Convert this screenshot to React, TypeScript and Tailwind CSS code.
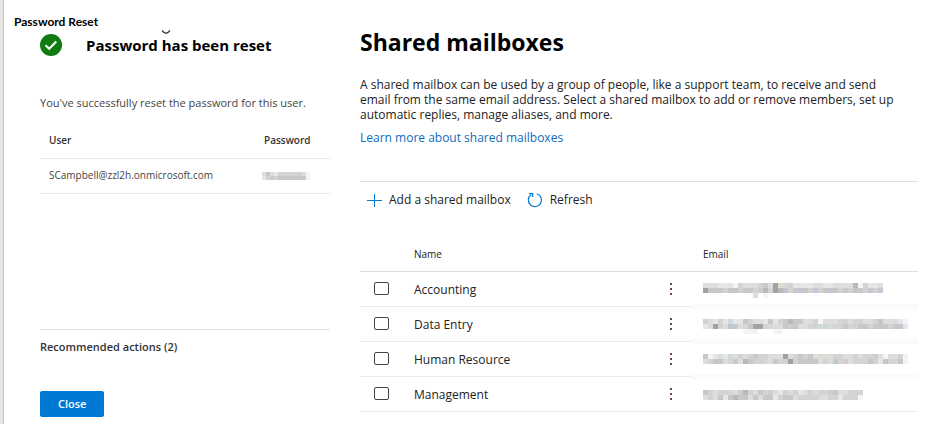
type Mosaic = { size: number; rows: string[] };

type Mailbox = { name: string; email: Mosaic };

const shades: Record<string, string> = {
  "1": "#a5a0a2",
  "2": "#b9b9bb",
  "3": "#c8c8c8",
  "4": "#d3d3d2",
  "5": "#dddddd",
  "6": "#e6e6e6",
  "7": "#f2f4f5",
  b: "#c1c7d0",
  c: "#d0dadd",
  p: "#d2cacc",
  v: "#c9c5d3",
  y: "#dcdcd2",
};

const hiddenPassword: Mosaic = {
  size: 4,
  rows: ["535644444457", "64p433333337"],
};

const mailboxes: Mailbox[] = [
  {
    name: "Accounting",
    email: {
      size: 5,
      rows: [
        "555666745554351yc4666655665555274665",
        "133343b4334p2412b43b34v43b3434b34v4v",
        "          5 7                       ",
      ],
    },
  },
  {
    name: "Data Entry",
    email: {
      size: 5,
      rows: [
        "45646c66345563643233554755544544554b55567",
        "65145b35c3114c553p35544c4c4434433433343v6",
        "        777   77                         ",
      ],
    },
  },
  {
    name: "Human Resource",
    email: {
      size: 5,
      rows: [
        "37656c54543445551543435y5544554544p575547",
        "54b35c352344c5344143333545b4p5444b46b4437",
      ],
    },
  },
  {
    name: "Management",
    email: {
      size: 5,
      rows: ["34544c5p24534p56454654544p355444", "54536323b53533643354444554464447"],
    },
  },
];

function Redacted({ mosaic, label }: { mosaic: Mosaic; label: string }) {
  const { size, rows } = mosaic;
  return (
    <svg
      role="img"
      aria-label={label}
      width={rows[0].length * size}
      height={rows.length * size}
      shapeRendering="crispEdges"
      className="block"
    >
      {rows.map((row, y) =>
        row.split("").map((key, x) =>
          shades[key] ? (
            <rect key={`${x}-${y}`} x={x * size} y={y * size} width={size} height={size} fill={shades[key]} />
          ) : null
        )
      )}
    </svg>
  );
}

function ResetPanel() {
  return (
    <section className="flex flex-col pt-[14px] pl-[10px]">
      <h1 className="font-['Lato'] text-[12px] leading-4 font-bold text-black">Password Reset</h1>

      <div className="flex flex-col items-start pl-[26px]">
        <div className="mt-[4px] flex items-center gap-[24px]">
          <svg width="22" height="22" viewBox="0 0 22 22" aria-hidden="true">
            <circle cx="11" cy="11" r="11" fill="#107c10" />
            <path d="M5.5 11.2 9.2 14.8 16.3 7.5" fill="none" stroke="#fff" strokeWidth="2" />
          </svg>
          <h2 className="relative text-[15px] leading-[22px] font-bold text-black">
            Password has been reset
            <svg className="absolute -top-1 left-[75px]" width="10" height="5" viewBox="0 0 10 5" aria-hidden="true">
              <path d="M1 .5Q5 6 9 .5" fill="none" stroke="#444" strokeWidth="1.3" />
            </svg>
          </h2>
        </div>

        <p className="mt-[39px] text-[11px] leading-4 whitespace-nowrap text-[#444]">
          You've successfully reset the password for this user.
        </p>

        <table className="mt-[12px] w-full text-left text-[10px] text-[#333]">
          <thead>
            <tr className="h-[35px] border-b border-[#eaeaea]">
              <th className="pl-[9px] font-semibold">User</th>
              <th className="w-[68px] pl-[2px] font-semibold">Password</th>
            </tr>
          </thead>
          <tbody>
            <tr className="h-[35px] border-b border-[#eaeaea]">
              <td className="pl-[9px] text-[#444]">SCampbell@zzl2h.onmicrosoft.com</td>
              <td>
                <Redacted mosaic={hiddenPassword} label="Hidden password" />
              </td>
            </tr>
          </tbody>
        </table>

        <h3 className="mt-[135px] w-full border-t border-[#e1e1e1] pt-[9px] text-[11px] leading-4 font-semibold text-[#333]">
          Recommended actions (2)
        </h3>

        <button type="button" className="mt-[36px] h-[26px] rounded-xs bg-[#0078d4] px-[18px] pt-[2px] text-[11px] font-semibold text-white">
          Close
        </button>
      </div>
    </section>
  );
}

function MailboxPanel() {
  return (
    <section className="pt-[28px]">
      <h2 className="text-[23px] leading-7 font-bold text-black">Shared mailboxes</h2>
      <p className="mt-[21px] max-w-[545px] text-[12px] leading-[15px] text-[#222]">
        A shared mailbox can be used by a group of people, like a support team, to receive and send email from the
        same email address. Select a shared mailbox to add or remove members, set up automatic replies, manage
        aliases, and more.
      </p>
      <a href="#learn-more" className="mt-[8px] block text-[12px] leading-4 text-[#0f6cbd]">
        Learn more about shared mailboxes
      </a>

      <div className="mt-[35px] flex items-center gap-[16px] border-t border-[#dedede] pt-[10px] pl-[7px] text-[12px] leading-4 text-[#222]">
        <button type="button" className="flex items-center gap-[7px]">
          <svg width="15" height="15" viewBox="0 0 15 15" fill="none" stroke="#0078d4" aria-hidden="true">
            <path d="M7.5 1v13M0 7.5h15" />
          </svg>
          Add a shared mailbox
        </button>
        <button type="button" className="flex items-center gap-[7px]">
          <svg width="16" height="16" viewBox="0 0 16 16" fill="none" stroke="#0078d4" aria-hidden="true">
            <path d="M9.8 1.7A6.6 6.6 0 1 1 4 2.7" strokeWidth="1.2" />
            <path d="M2 1.7h3.6v3.4" strokeWidth="1.2" />
          </svg>
          Refresh
        </button>
      </div>

      <table className="mt-[29px] w-full table-fixed text-left text-[#222]">
        <thead>
          <tr className="h-[34px] border-b border-[#dedede] text-[10px]">
            <th className="w-[54px]"></th>
            <th className="pt-[2px] font-normal">Name</th>
            <th className="w-[38px]"></th>
            <th className="w-[228px] pt-[2px] pl-[13px] font-normal">Email</th>
          </tr>
        </thead>
        <tbody>
          {mailboxes.map(({ name, email }) => (
            <tr key={name} className="group h-[35px] border-b border-[#eaeaea] text-[12px]">
              <td className="pl-[14px]">
                <input
                  type="checkbox"
                  aria-label={`Select ${name}`}
                  className="block h-[13px] w-[15px] appearance-none rounded-xs border border-[#444] bg-white checked:bg-[#0078d4]"
                />
              </td>
              <td className="pt-[2px]">{name}</td>
              <td>
                <button type="button" aria-label={`More options for ${name}`} className="mx-auto block">
                  <svg width="4" height="14" viewBox="0 0 4 14" fill="#74464a" aria-hidden="true">
                    <path d="M1 1h2v2H1zM1 6h2v2H1zM1 11h2v2H1z" />
                  </svg>
                </button>
              </td>
              <td className="border-b-[5px] border-[#fafafa] pl-[13px] group-last:border-b group-last:border-[#eaeaea]">
                <div className="h-[10px]">
                  <Redacted mosaic={email} label={`Hidden address of ${name}`} />
                </div>
              </td>
            </tr>
          ))}
        </tbody>
      </table>
    </section>
  );
}

export default function App() {
  return (
    <main className="flex min-h-screen bg-white font-['Open_Sans','Noto_Sans',sans-serif]">
      <div className="w-[4px] shrink-0 border-r border-[#c6c6c6] bg-[#e6e6e6]"></div>
      <div className="grid flex-1 grid-cols-[326fr_558fr] gap-[30px] pr-[21px]">
        <ResetPanel />
        <MailboxPanel />
      </div>
    </main>
  );
}
